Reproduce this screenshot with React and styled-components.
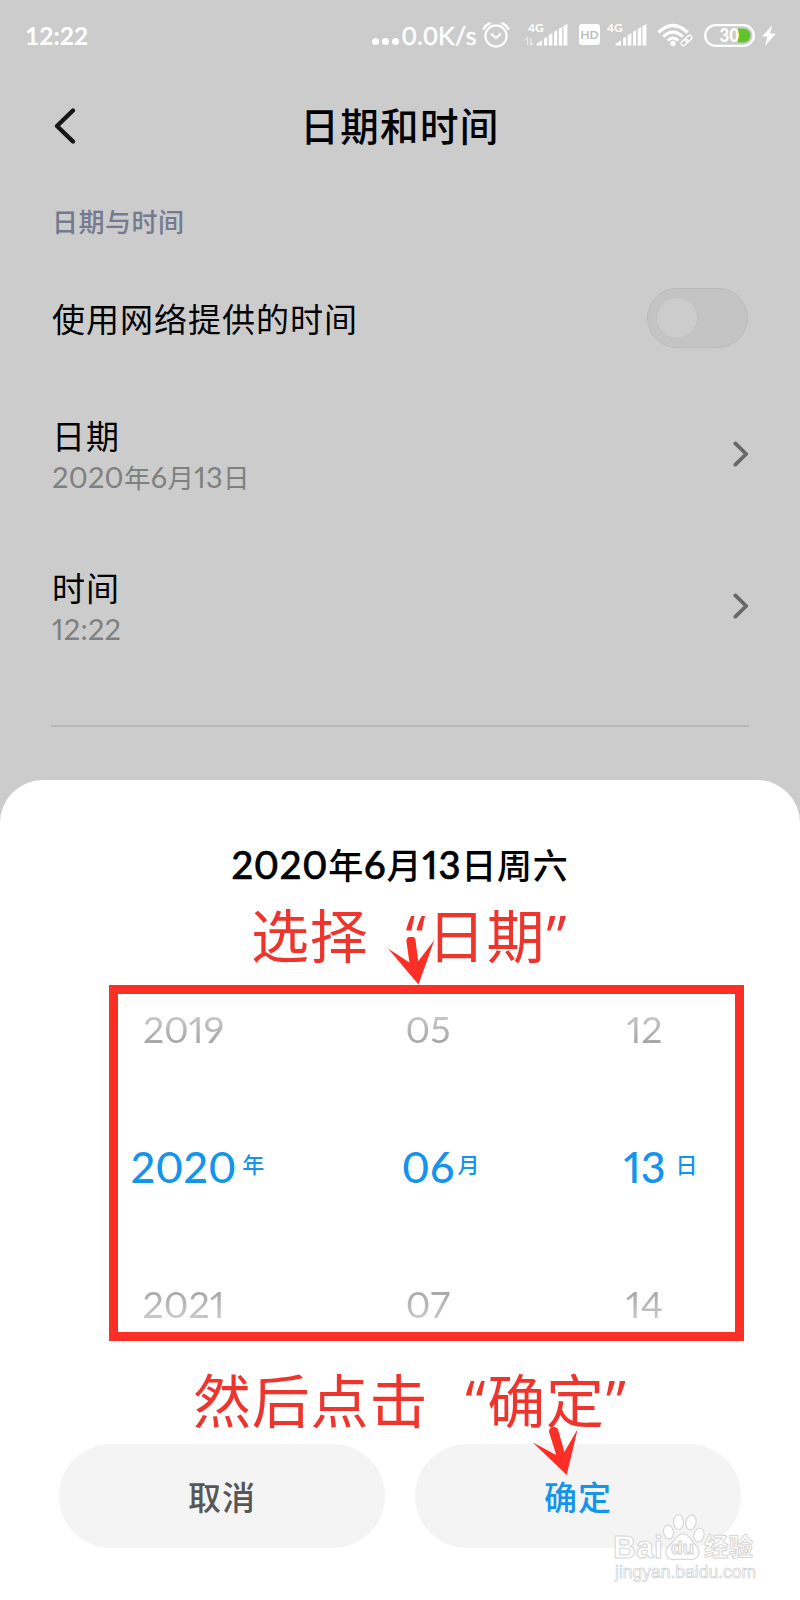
import React from "react";
import styled, { createGlobalStyle } from "styled-components";

const rows = [
  { title: "日期", value: ["2020", "年", "6", "月", "13", "日"] },
  { title: "时间", value: ["12:22"] },
];

const columns = [
  { prev: "2019", now: "2020", next: "2021", unit: "年", gap: 6 },
  { prev: "05", now: "06", next: "07", unit: "月", gap: 3 },
  { prev: "12", now: "13", next: "14", unit: "日", gap: 10 },
];

const Mixed = ({ parts }) =>
  parts.map((part, i) =>
    /\d/.test(part) ? <Num key={i}>{part}</Num> : <span key={i}>{part}</span>
  );

const AlarmIcon = () => (
  <svg width="28" height="28" viewBox="0 0 28 28" fill="none" stroke="#fff" strokeLinecap="round">
    <circle cx="14" cy="15" r="10.6" strokeWidth="2.2" />
    <path d="M9.8 13.2l4.2 3.8 4.2-3.8" strokeWidth="2.2" />
    <path d="M1.8 7.8Q3.8 3.8 7.8 2.4M20.2 2.4Q24.2 3.8 26.2 7.8" strokeWidth="2.4" />
  </svg>
);

const SignalIcon = ({ data }) => (
  <svg width="44" height="26" viewBox="0 0 44 26" fill="#fff">
    <text x="4" y="10.8" fontFamily="Lato, sans-serif" fontSize="12" fontWeight="700">
      4G
    </text>
    {data && (
      <path
        d="M3.5 24v-7l-2.2 2.4M6.8 17v7l2.2-2.4"
        fill="none"
        stroke="#fff"
        strokeOpacity="0.55"
        strokeWidth="1.3"
      />
    )}
    <path d="M12.5 24.5V23L18 19.3v5.2zM20 24.5v-7l3.2-2v9zM24.7 24.5V14.2l3.7-2.2v12.5zM30 24.5V10.8l3.2-1.7v15.4zM34.8 24.5V8l3.4-2v18.5zM39.5 24.5V5l3.9-2v21.5z" />
  </svg>
);

const HdIcon = () => (
  <HdBadge>
    <span>HD</span>
  </HdBadge>
);

const WifiIcon = () => (
  <svg width="36" height="24" viewBox="0 0 36 24" fill="none" stroke="#fff">
    <path d="M1.5 9.5Q16 -4.5 30.5 9.5" strokeWidth="3.4" />
    <path d="M6.2 13.7Q16 4.5 25.8 13.7" strokeWidth="3.2" />
    <path d="M10.6 17.5Q16 12.6 21.4 17.5" strokeWidth="3" />
    <circle cx="16" cy="20.5" r="2.7" fill="#fff" stroke="none" />
    <g transform="rotate(-43 29.5 17.5)" strokeWidth="1.3">
      <rect x="23" y="15.2" width="7.5" height="4.6" rx="2.3" />
      <rect x="28.5" y="15.2" width="7.5" height="4.6" rx="2.3" />
    </g>
  </svg>
);

const BatteryIcon = () => (
  <svg width="51" height="23" viewBox="0 0 51 23">
    <rect x="1.2" y="1.2" width="48.6" height="20.6" rx="10.3" fill="none" stroke="#fff" strokeWidth="2.3" />
    <path d="M34 4.5h5.5a7 7 0 0 1 0 14H34z" fill="#5fc42b" />
    <text
      x="15.5"
      y="17.8"
      fontFamily="Lato, sans-serif"
      fontSize="18"
      fontWeight="900"
      fill="#fff"
      textLength="19.5"
      lengthAdjust="spacingAndGlyphs"
    >
      30
    </text>
  </svg>
);

const BoltIcon = () => (
  <svg width="14" height="21" viewBox="0 0 14 21" fill="#fff">
    <path d="M10.5 0L0 11.5h5.5L3 21 14 8.5H8z" />
  </svg>
);

const Chevron = () => (
  <svg
    width="17"
    height="28"
    viewBox="0 0 17 28"
    fill="none"
    stroke="#686868"
    strokeWidth="3.8"
    strokeLinecap="round"
    strokeLinejoin="round"
  >
    <path d="M2.4 3.4L13.2 14 2.4 24.6" />
  </svg>
);

const PickArrow = () => (
  <svg width="47" height="48" viewBox="388 937 47 48" fill="#fc2f26">
    <path d="M388 948.5L409.4 962.5 406.4 941C406 935.5 414.6 935 415.4 939.5L418.2 961.2 434.4 940 418.5 984.5z" />
  </svg>
);

const ConfirmArrow = () => (
  <svg width="46" height="49" viewBox="532 1427 46 49" fill="#fc2f26">
    <path d="M532.5 1442.3L556.2 1455 549.2 1432.5C548 1427 556.4 1424.8 558.2 1430L564.4 1452 577.7 1429 566.7 1475z" />
  </svg>
);

const Paw = () => (
  <svg width="44" height="48" viewBox="0 0 44 48" fill="#fff" stroke="#d6d6d6" strokeWidth="1.2">
    <path d="M21 21c-6 0-7 5-10 8-4 4-8 6-7 11 1 6 6 7 10 6.5 4-.5 9-.5 13 0s9 0 10-6.5c.8-5-3-7-6-11-3-3.500-4-8-10-8z" />
    <ellipse cx="6.5" cy="19" rx="5" ry="7" transform="rotate(-8 6.5 19)" />
    <ellipse cx="16.5" cy="9" rx="5" ry="7.5" />
    <ellipse cx="29" cy="9.5" rx="5" ry="7.5" transform="rotate(10 29 9.5)" />
    <ellipse cx="37" cy="22" rx="5" ry="7" transform="rotate(14 37 22)" />
    <text x="20.5" y="41" textAnchor="middle" fontFamily="Liberation Sans, sans-serif" fontSize="19" fontWeight="700">
      du
    </text>
  </svg>
);

const App = () => {
  return (
    <>
      <GlobalStyle />
      <Screen>
        <StatusBar>
          <Clock>12:22</Clock>
          <Dots>
            <i />
            <i />
            <i />
          </Dots>
          <Speed>0.0K/s</Speed>
          <StatusIcon $top={21} $left={5}>
            <AlarmIcon />
          </StatusIcon>
          <StatusIcon $top={21} $left={14}>
            <SignalIcon data />
          </StatusIcon>
          <StatusIcon $top={24} $left={11}>
            <HdIcon />
          </StatusIcon>
          <StatusIcon $top={21} $left={3}>
            <SignalIcon />
          </StatusIcon>
          <StatusIcon $top={23} $left={10}>
            <WifiIcon />
          </StatusIcon>
          <StatusIcon $top={24} $left={11}>
            <BatteryIcon />
          </StatusIcon>
          <StatusIcon $top={25} $left={7}>
            <BoltIcon />
          </StatusIcon>
        </StatusBar>

        <TitleBar>
          <svg
            width="24"
            height="38"
            viewBox="0 0 24 38"
            fill="none"
            stroke="#151515"
            strokeWidth="4.4"
            strokeLinecap="round"
            strokeLinejoin="round"
          >
            <path d="M20 3.5L4 19 20 34.5" />
          </svg>
          <Title>日期和时间</Title>
        </TitleBar>

        <Section>日期与时间</Section>
        <NetworkRow>
          <Label>使用网络提供的时间</Label>
          <Toggle>
            <Knob />
          </Toggle>
        </NetworkRow>
        {rows.map((row) => (
          <Row key={row.title}>
            <div>
              <Label>{row.title}</Label>
              <Value>
                <Mixed parts={row.value} />
              </Value>
            </div>
            <Chevron />
          </Row>
        ))}
        <Divider />

        <Sheet>
          <Heading>
            <Mixed parts={["2020", "年", "6", "月", "13", "日周六"]} />
          </Heading>
          <Callout $left={251} $height={96}>
            选择<Quote $end>“</Quote>日期<Quote>”</Quote>
          </Callout>
          <Picker>
            {columns.map((col) => (
              <Column key={col.unit}>
                <Faded>{col.prev}</Faded>
                <Selected>
                  <b>{col.now}</b>
                  <Unit $gap={col.gap}>{col.unit}</Unit>
                </Selected>
                <Faded $down>{col.next}</Faded>
              </Column>
            ))}
          </Picker>
          <Callout $left={193} $height={103} $top={13}>
            然后点击<Quote $end>“</Quote>确定<Quote>”</Quote>
          </Callout>
          <Buttons>
            <Button>取消</Button>
            <Button $primary>确定</Button>
          </Buttons>
        </Sheet>

        <Overlay $x={388} $y={937}>
          <PickArrow />
        </Overlay>
        <Overlay $x={532} $y={1427}>
          <ConfirmArrow />
        </Overlay>
        <Overlay $x={613} $y={1512}>
          <Brand>
            <BrandLatin>Bai</BrandLatin>
            <Paw />
            <BrandChinese>经验</BrandChinese>
          </Brand>
          <BrandUrl>jingyan.baidu.com</BrandUrl>
        </Overlay>
      </Screen>
    </>
  );
};

const GlobalStyle = createGlobalStyle`
  body {
    margin: 0;
  }
  svg {
    display: block;
    flex: none;
  }
`;

const Screen = styled.div`
  position: relative;
  width: 800px;
  height: 1600px;
  overflow: hidden;
  display: flex;
  flex-direction: column;
  background: #ccc;
  color: #000;
  font-family: Lato, "Noto Sans CJK SC", sans-serif;
  white-space: nowrap;
`;

const StatusBar = styled.div`
  display: flex;
  align-items: flex-start;
  height: 70px;
  padding-left: 25px;
  color: #fff;
`;

const Clock = styled.div`
  width: 347px;
  line-height: 71px;
  font-size: 24.5px;
  font-weight: 700;
`;

const Dots = styled.div`
  display: flex;
  gap: 3px;
  width: 30px;
  margin-top: 38px;

  i {
    width: 7px;
    height: 7px;
    border-radius: 50%;
    background: #fff;
  }
`;

const Speed = styled.div`
  width: 75px;
  line-height: 70px;
  font-size: 25px;
  letter-spacing: 0.4px;
  -webkit-text-stroke: 0.5px #fff;
`;

const StatusIcon = styled.div`
  margin-top: ${(p) => p.$top}px;
  margin-left: ${(p) => p.$left}px;
`;

const HdBadge = styled.div`
  display: flex;
  align-items: center;
  justify-content: center;
  width: 21px;
  height: 21px;
  border-radius: 3px;
  background: #fff;
  color: #bebebe;
  font-size: 12px;
  font-weight: 700;
  line-height: 21px;
`;

const TitleBar = styled.div`
  display: grid;
  grid-template-columns: 24px 1fr 24px;
  align-items: center;
  height: 111px;
  padding: 0 53px;
`;

const Title = styled.h1`
  margin: 0 0 3px;
  text-align: center;
  font-size: 38.5px;
  font-weight: 500;
  letter-spacing: 1.4px;
`;

const Section = styled.div`
  height: 82px;
  padding-left: 52px;
  line-height: 82px;
  font-size: 26px;
  font-weight: 500;
  letter-spacing: 0.5px;
  color: #757a90;
`;

const NetworkRow = styled.div`
  display: flex;
  align-items: center;
  justify-content: space-between;
  height: 110px;
  padding: 0 52px;
`;

const Label = styled.div`
  line-height: 46px;
  padding-top: 1px;
  font-size: 33px;
  letter-spacing: 1px;
`;

const Toggle = styled.div`
  box-sizing: border-box;
  width: 101px;
  height: 60px;
  padding: 8px;
  border: 1px solid #bbb;
  border-radius: 30px;
  background: #c4c4c4;
`;

const Knob = styled.div`
  box-sizing: border-box;
  width: 42px;
  height: 42px;
  border: 1px solid #c0c0c0;
  border-radius: 50%;
  background: #ccc;
`;

const Row = styled.div`
  box-sizing: border-box;
  display: flex;
  align-items: center;
  justify-content: space-between;
  height: 152px;
  padding: 9px 50px 0 52px;
`;

const Value = styled.div`
  line-height: 36px;
  font-size: 26.5px;
  letter-spacing: 0.3px;
  color: #808080;
`;

const Num = styled.span`
  font-size: 1.09em;
  font-feature-settings: "pnum";
`;

const Divider = styled.div`
  height: 2px;
  margin: 48px 51px 53px;
  background: #b8b8b8;
`;

const Sheet = styled.div`
  position: absolute;
  top: 780px;
  left: 0;
  box-sizing: border-box;
  width: 800px;
  height: 820px;
  padding-top: 59px;
  border-radius: 43px 43px 0 0;
  background: #fff;
`;

const Heading = styled.div`
  height: 50px;
  line-height: 50px;
  text-align: center;
  font-size: 35px;
  font-weight: 500;
  letter-spacing: 0.8px;

  ${Num} {
    -webkit-text-stroke: 0.6px #000;
  }
`;

const Callout = styled.div`
  box-sizing: border-box;
  height: ${(p) => p.$height}px;
  padding-top: ${(p) => p.$top || 0}px;
  padding-left: ${(p) => p.$left}px;
  line-height: 88px;
  font-family: "Noto Sans CJK SC", sans-serif;
  font-size: 58px;
  letter-spacing: 0.8px;
  color: #ee352d;
`;

const Quote = styled.span`
  display: inline-block;
  width: 59px;
  padding: 0 1px;
  box-sizing: border-box;
  font-family: "Open Sans", sans-serif;
  line-height: 1;
  text-align: ${(p) => (p.$end ? "right" : "left")};
`;

const Picker = styled.div`
  box-sizing: border-box;
  display: grid;
  grid-template-columns: 131px 358px 75px;
  width: 635px;
  height: 356px;
  margin-left: 109px;
  border: 9px solid #fc2f26;
`;

const Column = styled.div`
  display: flex;
  flex-direction: column;
  align-items: center;
  gap: 81.5px;
  padding-top: 6.5px;
`;

const Faded = styled.div`
  height: 56px;
  line-height: 56px;
  font-size: 37.5px;
  font-feature-settings: "pnum";
  color: transparent;
  background: linear-gradient(${(p) => (p.$down ? "0deg" : "180deg")}, #d2d2d2 10%, #9c9c9c 90%);
  background-clip: text;
`;

const Selected = styled.div`
  display: grid;
  grid-template-columns: 40px auto 40px;
  height: 56px;
  line-height: 58px;
  color: #1594eb;

  b {
    grid-column: 2;
    font-size: 43px;
    font-weight: 500;
    font-feature-settings: "pnum";
  }
`;

const Unit = styled.span`
  padding-left: ${(p) => p.$gap}px;
  line-height: 54px;
  font-size: 22px;
  font-weight: 500;
`;

const Buttons = styled.div`
  display: flex;
  gap: 30px;
  padding-left: 59px;
`;

const Button = styled.button`
  width: 326px;
  height: 104px;
  padding: 0;
  border: 0;
  border-radius: 52px;
  background: #f4f4f4;
  color: ${(p) => (p.$primary ? "#1594eb" : "#575757")};
  font-family: "Noto Sans CJK SC", sans-serif;
  font-size: 33px;
  font-weight: 500;
  letter-spacing: 1px;
`;

const Overlay = styled.div`
  position: absolute;
  left: ${(p) => p.$x}px;
  top: ${(p) => p.$y}px;
`;

const Brand = styled.div`
  display: flex;
  align-items: flex-end;
  height: 49px;
  color: #fff;
  -webkit-text-stroke: 1px #d6d6d6;
`;

const BrandLatin = styled.span`
  width: 49px;
  line-height: 28px;
  font-family: "Liberation Sans", sans-serif;
  font-size: 32px;
  font-weight: 700;
`;

const BrandChinese = styled.span`
  margin-left: -2px;
  line-height: 30px;
  font-family: "Noto Sans CJK SC", sans-serif;
  font-size: 24.5px;
  font-weight: 700;
`;

const BrandUrl = styled.div`
  padding-left: 2px;
  line-height: 22px;
  font-family: "Liberation Sans", sans-serif;
  font-size: 17.5px;
  color: #fff;
  -webkit-text-stroke: 0.7px #d0d0d0;
`;

export default App;
